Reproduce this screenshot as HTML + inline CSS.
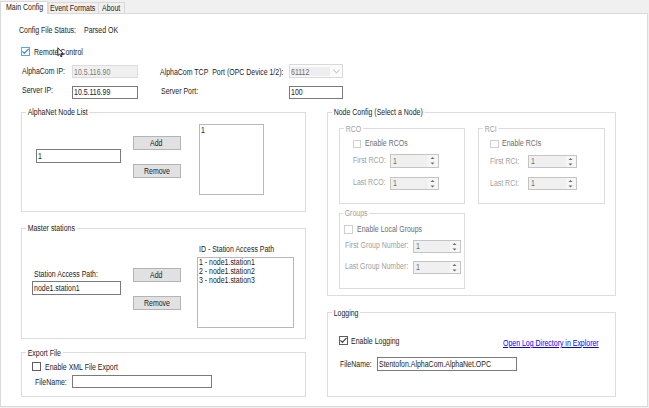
<!DOCTYPE html>
<html><head><meta charset="utf-8"><style>
html,body{margin:0;padding:0;}
body{width:649px;height:408px;background:#f0f0f0;position:relative;overflow:hidden;font-family:"Liberation Sans",sans-serif;}
.t{position:absolute;white-space:pre;line-height:0;height:0;transform-origin:0 0;}
</style></head><body>
<div style="position:absolute;left:0px;top:13px;width:648px;height:394px;box-sizing:border-box;border:1px solid #d9d9d9;background:#fff;"></div>
<div style="position:absolute;left:0px;top:1px;width:48px;height:13px;box-sizing:border-box;border:1px solid #d9d9d9;border-bottom:none;background:#fff;"></div>
<div style="position:absolute;left:48px;top:2px;width:51px;height:11px;box-sizing:border-box;border:1px solid #d9d9d9;border-bottom:none;background:#f0f0f0;"></div>
<div style="position:absolute;left:98px;top:2px;width:27px;height:11px;box-sizing:border-box;border:1px solid #d9d9d9;border-bottom:none;background:#f0f0f0;"></div>
<div class="t" style="left:5.6px;top:7.00px;color:#1c1c1c;transform:scaleX(0.82);font-size:8.5px;">Main Config</div>
<div class="t" style="left:50.1px;top:8.00px;color:#1c1c1c;transform:scaleX(0.82);font-size:8.5px;">Event Formats</div>
<div class="t" style="left:101.6px;top:8.00px;color:#1c1c1c;transform:scaleX(0.82);font-size:8.5px;">About</div>
<div class="t" style="left:19.200000000000003px;top:30.00px;color:#1c1c1c;transform:scaleX(0.82);font-size:8.5px;">Config File Status:</div>
<div class="t" style="left:84.3px;top:30.00px;color:#1c1c1c;transform:scaleX(0.82);font-size:8.5px;">Parsed OK</div>
<div style="position:absolute;left:21px;top:47px;width:9px;height:9px;box-sizing:border-box;border:1px solid #5ca3ea;background:#fff;"></div>
<svg style="position:absolute;left:21px;top:47px" width="9" height="9" viewBox="0 0 9 9"><path d="M1.4 4.4 L3.4 6.3 L7.6 1.9" stroke="#3a8de3" stroke-width="1.3" fill="none"/></svg>
<div class="t" style="left:33.6px;top:52.00px;color:#1c1c1c;transform:scaleX(0.82);font-size:8.5px;">Remote Control</div>
<div class="t" style="left:21.900000000000002px;top:71.00px;color:#1c1c1c;transform:scaleX(0.82);font-size:8.5px;">AlphaCom IP:</div>
<div style="position:absolute;left:72px;top:65px;width:66px;height:13px;box-sizing:border-box;border:1px solid #dcdcdc;background:#f0f0f0;"></div>
<div class="t" style="left:74.1px;top:72.00px;color:#7a7a7a;transform:scaleX(0.82);font-size:8.5px;">10.5.116.90</div>
<div class="t" style="left:21.900000000000002px;top:90.00px;color:#1c1c1c;transform:scaleX(0.82);font-size:8.5px;">Server IP:</div>
<div style="position:absolute;left:72px;top:86px;width:66px;height:13px;box-sizing:border-box;border:1px solid #7a7a7a;background:#fff;"></div>
<div class="t" style="left:74.1px;top:92.00px;color:#1c1c1c;transform:scaleX(0.82);font-size:8.5px;">10.5.116.99</div>
<div class="t" style="left:159.6px;top:72.00px;color:#1c1c1c;transform:scaleX(0.82);font-size:8.5px;">AlphaCom TCP&nbsp; Port (OPC Device 1/2):</div>
<div style="position:absolute;left:289px;top:64px;width:54px;height:14px;box-sizing:border-box;border:1px solid #d9d9d9;background:#fbfbfb;"></div>
<div style="position:absolute;left:291px;top:67px;width:39px;height:9px;box-sizing:border-box;background:#eeeeee;"></div>
<div class="t" style="left:291.1px;top:72.00px;color:#6d6d6d;transform:scaleX(0.82);font-size:8.5px;">61112</div>
<svg style="position:absolute;left:333px;top:69px" width="7" height="5" viewBox="0 0 7 5"><path d="M0.6 1 L3.5 3.8 L6.4 1" stroke="#9a9a9a" stroke-width="0.8" fill="none"/></svg>
<div class="t" style="left:161.29999999999998px;top:91.00px;color:#1c1c1c;transform:scaleX(0.82);font-size:8.5px;">Server Port:</div>
<div style="position:absolute;left:289px;top:86px;width:54px;height:13px;box-sizing:border-box;border:1px solid #7a7a7a;background:#fff;"></div>
<div class="t" style="left:291.1px;top:92.00px;color:#1c1c1c;transform:scaleX(0.82);font-size:8.5px;">100</div>
<div style="position:absolute;left:21px;top:112px;width:285px;height:100px;box-sizing:border-box;border:1px solid #dcdcdc;"></div>
<div class="t" style="left:26.200000000000003px;top:112.00px;color:#1c1c1c;transform:scaleX(0.82);font-size:8.5px;"><span style='background:#fff;padding:0 2px'>AlphaNet Node List</span></div>
<div style="position:absolute;left:36px;top:149px;width:85px;height:14px;box-sizing:border-box;border:1px solid #7a7a7a;background:#fff;"></div>
<div class="t" style="left:38.1px;top:156.00px;color:#1c1c1c;transform:scaleX(0.82);font-size:8.5px;">1</div>
<div style="position:absolute;left:133px;top:136px;width:48px;height:14px;box-sizing:border-box;border:1px solid #b4b4b4;background:#e1e1e1;"></div>
<div class="t" style="left:150.1px;top:143.00px;color:#1c1c1c;transform:scaleX(0.82);font-size:8.5px;">Add</div>
<div style="position:absolute;left:133px;top:164px;width:48px;height:14px;box-sizing:border-box;border:1px solid #b4b4b4;background:#e1e1e1;"></div>
<div class="t" style="left:143.6px;top:171.00px;color:#1c1c1c;transform:scaleX(0.82);font-size:8.5px;">Remove</div>
<div style="position:absolute;left:199px;top:124px;width:65px;height:71px;box-sizing:border-box;border:1px solid #b6b9be;background:#fff;"></div>
<div class="t" style="left:201.1px;top:130.00px;color:#1c1c1c;transform:scaleX(0.82);font-size:8.5px;">1</div>
<div style="position:absolute;left:21px;top:228px;width:285px;height:111px;box-sizing:border-box;border:1px solid #dcdcdc;"></div>
<div class="t" style="left:26.200000000000003px;top:228.00px;color:#1c1c1c;transform:scaleX(0.82);font-size:8.5px;"><span style='background:#fff;padding:0 2px'>Master stations</span></div>
<div class="t" style="left:34.2px;top:274.00px;color:#1c1c1c;transform:scaleX(0.82);font-size:8.5px;">Station Access Path:</div>
<div style="position:absolute;left:32px;top:281px;width:89px;height:14px;box-sizing:border-box;border:1px solid #7a7a7a;background:#fff;"></div>
<div class="t" style="left:34.1px;top:288.00px;color:#1c1c1c;transform:scaleX(0.82);font-size:8.5px;">node1.station1</div>
<div style="position:absolute;left:133px;top:268px;width:48px;height:14px;box-sizing:border-box;border:1px solid #b4b4b4;background:#e1e1e1;"></div>
<div class="t" style="left:150.1px;top:275.00px;color:#1c1c1c;transform:scaleX(0.82);font-size:8.5px;">Add</div>
<div style="position:absolute;left:133px;top:296px;width:48px;height:14px;box-sizing:border-box;border:1px solid #b4b4b4;background:#e1e1e1;"></div>
<div class="t" style="left:143.6px;top:303.00px;color:#1c1c1c;transform:scaleX(0.82);font-size:8.5px;">Remove</div>
<div class="t" style="left:198.9px;top:249.00px;color:#1c1c1c;transform:scaleX(0.82);font-size:8.5px;">ID - Station Access Path</div>
<div style="position:absolute;left:197px;top:257px;width:97px;height:71px;box-sizing:border-box;border:1px solid #b6b9be;background:#fff;"></div>
<div class="t" style="left:199.1px;top:262.00px;color:#1c1c1c;transform:scaleX(0.82);font-size:8.5px;">1 - node1.station1</div>
<div class="t" style="left:199.1px;top:271.00px;color:#1c1c1c;transform:scaleX(0.82);font-size:8.5px;">2 - node1.station2</div>
<div class="t" style="left:199.1px;top:280.00px;color:#1c1c1c;transform:scaleX(0.82);font-size:8.5px;">3 - node1.station3</div>
<div style="position:absolute;left:21px;top:352px;width:285px;height:45px;box-sizing:border-box;border:1px solid #dcdcdc;"></div>
<div class="t" style="left:26.200000000000003px;top:353.00px;color:#1c1c1c;transform:scaleX(0.82);font-size:8.5px;"><span style='background:#fff;padding:0 2px'>Export File</span></div>
<div style="position:absolute;left:32px;top:362px;width:9px;height:9px;box-sizing:border-box;border:1px solid #5e5e5e;background:#fff;"></div>
<div class="t" style="left:45.0px;top:367.00px;color:#1c1c1c;transform:scaleX(0.82);font-size:8.5px;">Enable XML File Export</div>
<div class="t" style="left:34.5px;top:382.00px;color:#1c1c1c;transform:scaleX(0.82);font-size:8.5px;">FileName:</div>
<div style="position:absolute;left:72px;top:375px;width:140px;height:13px;box-sizing:border-box;border:1px solid #7a7a7a;background:#fff;"></div>
<div class="t" style="left:74.1px;top:381.00px;color:#1c1c1c;transform:scaleX(0.82);font-size:8.5px;"></div>
<div style="position:absolute;left:327px;top:112px;width:289px;height:184px;box-sizing:border-box;border:1px solid #dcdcdc;"></div>
<div class="t" style="left:331.70000000000005px;top:112.00px;color:#1c1c1c;transform:scaleX(0.82);font-size:8.5px;"><span style='background:#fff;padding:0 2px'>Node Config (Select a Node)</span></div>
<div style="position:absolute;left:339px;top:128px;width:126px;height:76px;box-sizing:border-box;border:1px solid #dcdcdc;"></div>
<div class="t" style="left:343.50000000000006px;top:129.00px;color:#a0a0a0;transform:scaleX(0.82);font-size:8.5px;"><span style='background:#fff;padding:0 2px'>RCO</span></div>
<div style="position:absolute;left:352.5px;top:139.5px;width:8.5px;height:8.5px;box-sizing:border-box;border:1px solid #cfcfcf;background:#fff;"></div>
<div class="t" style="left:364.6px;top:143.00px;color:#6d6d6d;transform:scaleX(0.82);font-size:8.5px;">Enable RCOs</div>
<div class="t" style="left:352.6px;top:160.00px;color:#a0a0a0;transform:scaleX(0.82);font-size:8.5px;">First RCO:</div>
<div style="position:absolute;left:390px;top:154px;width:49px;height:14px;box-sizing:border-box;border:1px solid #c4c4c4;background:#f0f0f0;"></div>
<div style="position:absolute;left:428px;top:155px;width:10px;height:12px;box-sizing:border-box;background:#f6f6f6;"></div>
<div class="t" style="left:392.6px;top:161.00px;color:#6d6d6d;transform:scaleX(0.82);font-size:8.5px;">1</div>
<svg style="position:absolute;left:428px;top:154px" width="10" height="14" viewBox="0 0 10 14"><path d="M2.5 5 L4.5 3 L6.5 5 Z M2.5 8.4 L4.5 10.4 L6.5 8.4 Z" fill="#6a6a6a"/></svg>
<div class="t" style="left:352.6px;top:182.00px;color:#a0a0a0;transform:scaleX(0.82);font-size:8.5px;">Last RCO:</div>
<div style="position:absolute;left:390px;top:177px;width:49px;height:13px;box-sizing:border-box;border:1px solid #c4c4c4;background:#f0f0f0;"></div>
<div style="position:absolute;left:428px;top:178px;width:10px;height:11px;box-sizing:border-box;background:#f6f6f6;"></div>
<div class="t" style="left:392.6px;top:183.00px;color:#6d6d6d;transform:scaleX(0.82);font-size:8.5px;">1</div>
<svg style="position:absolute;left:428px;top:177px" width="10" height="13" viewBox="0 0 10 13"><path d="M2.5 5 L4.5 3 L6.5 5 Z M2.5 8.4 L4.5 10.4 L6.5 8.4 Z" fill="#6a6a6a"/></svg>
<div style="position:absolute;left:478px;top:128px;width:127px;height:76px;box-sizing:border-box;border:1px solid #dcdcdc;"></div>
<div class="t" style="left:483.20000000000005px;top:129.00px;color:#a0a0a0;transform:scaleX(0.82);font-size:8.5px;"><span style='background:#fff;padding:0 2px'>RCI</span></div>
<div style="position:absolute;left:490.3px;top:139.5px;width:8.5px;height:8.5px;box-sizing:border-box;border:1px solid #cfcfcf;background:#fff;"></div>
<div class="t" style="left:502.20000000000005px;top:143.00px;color:#6d6d6d;transform:scaleX(0.82);font-size:8.5px;">Enable RCIs</div>
<div class="t" style="left:489.90000000000003px;top:161.00px;color:#a0a0a0;transform:scaleX(0.82);font-size:8.5px;">First RCI:</div>
<div style="position:absolute;left:528px;top:154.5px;width:49px;height:13.0px;box-sizing:border-box;border:1px solid #c4c4c4;background:#f0f0f0;"></div>
<div style="position:absolute;left:566px;top:155.5px;width:10px;height:11.0px;box-sizing:border-box;background:#f6f6f6;"></div>
<div class="t" style="left:530.6px;top:161.00px;color:#6d6d6d;transform:scaleX(0.82);font-size:8.5px;">1</div>
<svg style="position:absolute;left:566px;top:154.5px" width="10" height="13.0" viewBox="0 0 10 13.0"><path d="M2.5 5 L4.5 3 L6.5 5 Z M2.5 8.4 L4.5 10.4 L6.5 8.4 Z" fill="#6a6a6a"/></svg>
<div class="t" style="left:489.90000000000003px;top:183.00px;color:#a0a0a0;transform:scaleX(0.82);font-size:8.5px;">Last RCI:</div>
<div style="position:absolute;left:528px;top:177px;width:49px;height:13px;box-sizing:border-box;border:1px solid #c4c4c4;background:#f0f0f0;"></div>
<div style="position:absolute;left:566px;top:178px;width:10px;height:11px;box-sizing:border-box;background:#f6f6f6;"></div>
<div class="t" style="left:530.6px;top:183.00px;color:#6d6d6d;transform:scaleX(0.82);font-size:8.5px;">1</div>
<svg style="position:absolute;left:566px;top:177px" width="10" height="13" viewBox="0 0 10 13"><path d="M2.5 5 L4.5 3 L6.5 5 Z M2.5 8.4 L4.5 10.4 L6.5 8.4 Z" fill="#6a6a6a"/></svg>
<div style="position:absolute;left:339px;top:213px;width:126px;height:76px;box-sizing:border-box;border:1px solid #dcdcdc;"></div>
<div class="t" style="left:343.20000000000005px;top:213.00px;color:#a0a0a0;transform:scaleX(0.82);font-size:8.5px;"><span style='background:#fff;padding:0 2px'>Groups</span></div>
<div style="position:absolute;left:344.3px;top:225px;width:8.5px;height:8.5px;box-sizing:border-box;border:1px solid #cfcfcf;background:#fff;"></div>
<div class="t" style="left:356.6px;top:229.00px;color:#6d6d6d;transform:scaleX(0.82);font-size:8.5px;">Enable Local Groups</div>
<div class="t" style="left:344.6px;top:245.00px;color:#a0a0a0;transform:scaleX(0.82);font-size:8.5px;">First Group Number:</div>
<div style="position:absolute;left:413px;top:240px;width:48px;height:13px;box-sizing:border-box;border:1px solid #c4c4c4;background:#f0f0f0;"></div>
<div style="position:absolute;left:450px;top:241px;width:10px;height:11px;box-sizing:border-box;background:#f6f6f6;"></div>
<div class="t" style="left:415.6px;top:246.00px;color:#6d6d6d;transform:scaleX(0.82);font-size:8.5px;">1</div>
<svg style="position:absolute;left:450px;top:240px" width="10" height="13" viewBox="0 0 10 13"><path d="M2.5 5 L4.5 3 L6.5 5 Z M2.5 8.4 L4.5 10.4 L6.5 8.4 Z" fill="#6a6a6a"/></svg>
<div class="t" style="left:344.6px;top:266.00px;color:#a0a0a0;transform:scaleX(0.82);font-size:8.5px;">Last Group Number:</div>
<div style="position:absolute;left:413px;top:261px;width:48px;height:13px;box-sizing:border-box;border:1px solid #c4c4c4;background:#f0f0f0;"></div>
<div style="position:absolute;left:450px;top:262px;width:10px;height:11px;box-sizing:border-box;background:#f6f6f6;"></div>
<div class="t" style="left:415.6px;top:267.00px;color:#6d6d6d;transform:scaleX(0.82);font-size:8.5px;">1</div>
<svg style="position:absolute;left:450px;top:261px" width="10" height="13" viewBox="0 0 10 13"><path d="M2.5 5 L4.5 3 L6.5 5 Z M2.5 8.4 L4.5 10.4 L6.5 8.4 Z" fill="#6a6a6a"/></svg>
<div style="position:absolute;left:327px;top:312px;width:289px;height:85px;box-sizing:border-box;border:1px solid #dcdcdc;"></div>
<div class="t" style="left:331.50000000000006px;top:313.00px;color:#1c1c1c;transform:scaleX(0.82);font-size:8.5px;"><span style='background:#fff;padding:0 2px'>Logging</span></div>
<div style="position:absolute;left:338.5px;top:336px;width:9.0px;height:9px;box-sizing:border-box;border:1px solid #5e5e5e;background:#fff;"></div>
<svg style="position:absolute;left:338.5px;top:336px" width="9" height="9" viewBox="0 0 9 9"><path d="M1.4 4.4 L3.4 6.3 L7.6 1.9" stroke="#4a4a4a" stroke-width="1.3" fill="none"/></svg>
<div class="t" style="left:351.20000000000005px;top:341.00px;color:#1c1c1c;transform:scaleX(0.82);font-size:8.5px;">Enable Logging</div>
<div class="t" style="left:502.8px;top:343.00px;color:#0000ff;transform:scaleX(0.82);font-size:8.5px;text-decoration:underline;text-decoration-thickness:0.8px;text-underline-offset:0.5px;">Open Log Directory in Explorer</div>
<div class="t" style="left:340.1px;top:364.00px;color:#1c1c1c;transform:scaleX(0.82);font-size:8.5px;">FileName:</div>
<div style="position:absolute;left:377px;top:357px;width:140px;height:14px;box-sizing:border-box;border:1px solid #7a7a7a;background:#fff;"></div>
<div class="t" style="left:379.1px;top:364.00px;color:#1c1c1c;transform:scaleX(0.82);font-size:8.5px;">Stentofon.AlphaCom.AlphaNet.OPC</div>
<svg style="position:absolute;left:57px;top:46.5px" width="8" height="12" viewBox="0 0 8 12"><g transform="translate(0.4 0.3) scale(0.88)"><path d="M0.5 0.5 L0.5 9.5 L2.6 7.6 L4 10.8 L5.3 10.2 L4 7.2 L6.8 7.2 Z" fill="#fff" stroke="#1a1a1a" stroke-width="1.05"/></g></svg>
</body></html>
